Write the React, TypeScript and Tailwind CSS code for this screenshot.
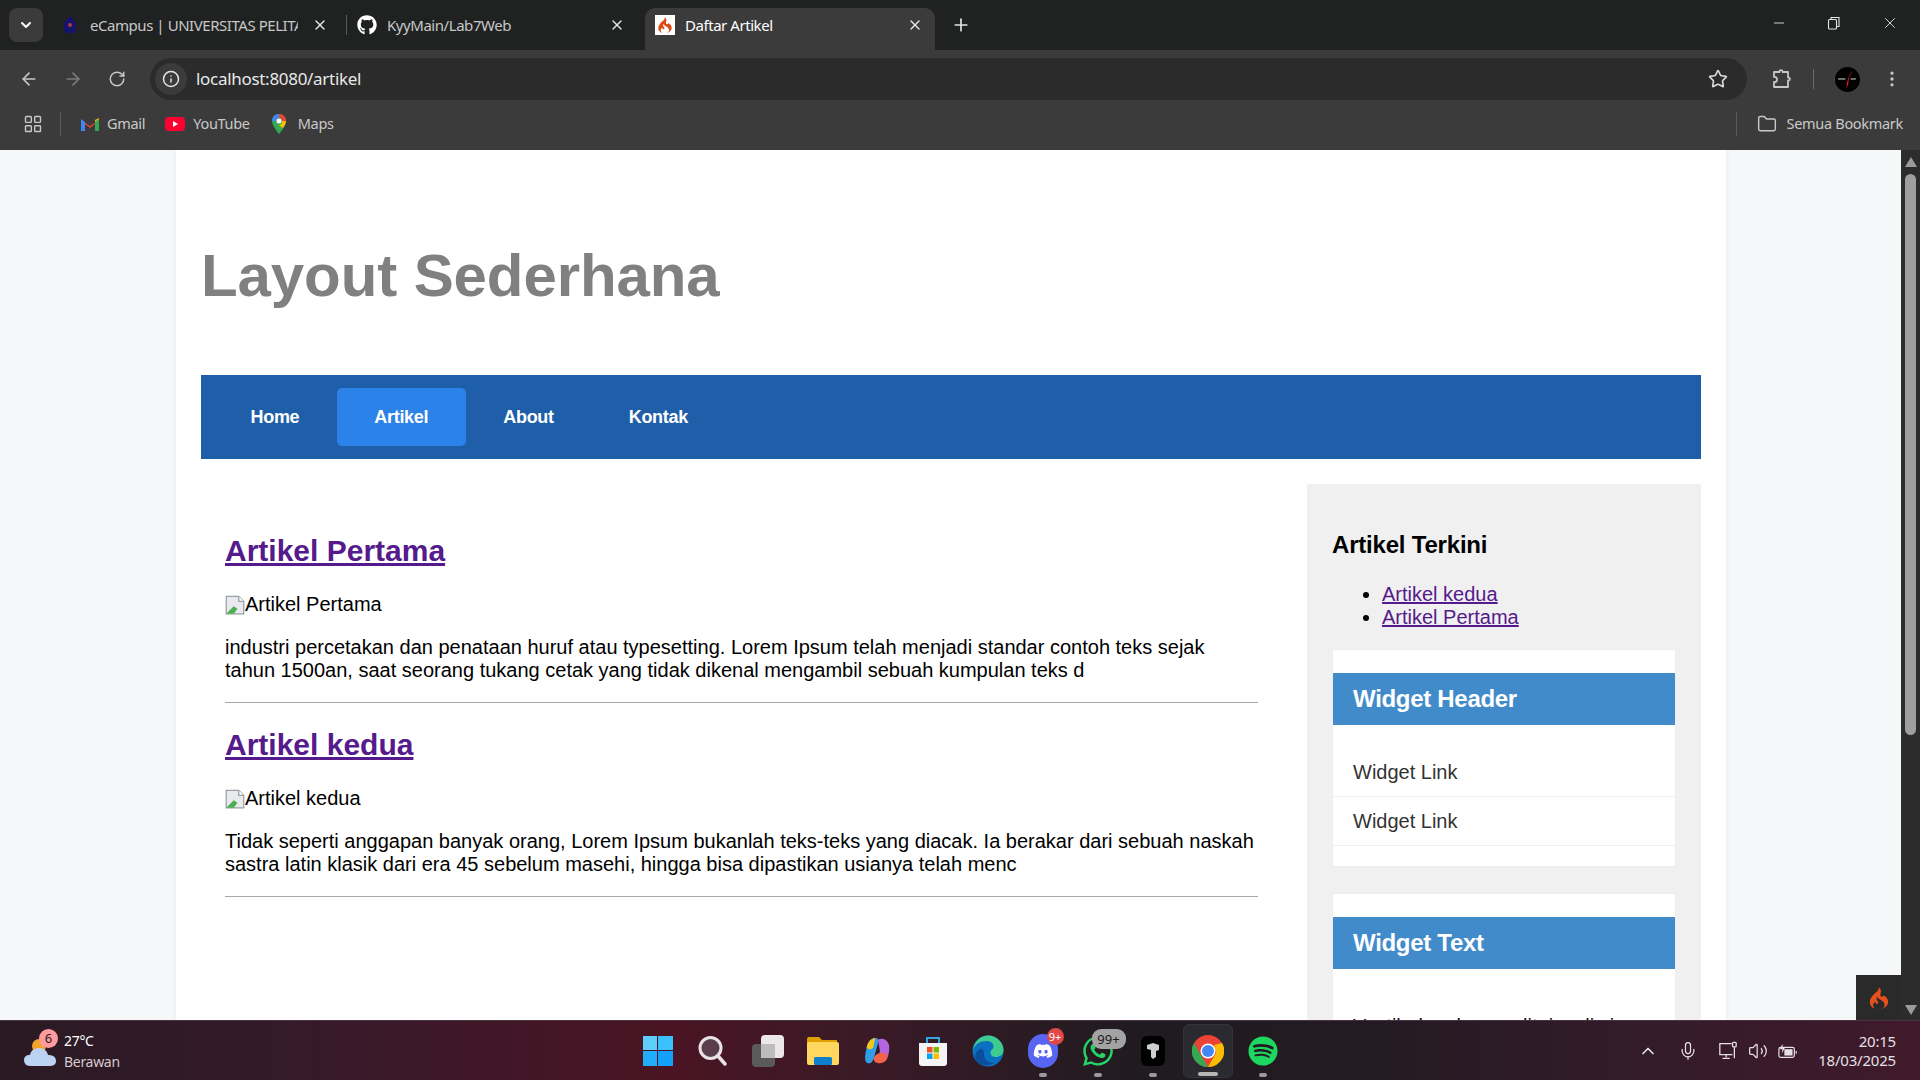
import React from 'react';
import { ArrowLeft, ArrowRight, RotateCw, Info, Star, EllipsisVertical, Folder, Plus, X, Minus, ChevronDown, ChevronUp, Mic, Volume2, LayoutGrid } from 'lucide-react';
import { FaGithub, FaDiscord, FaWhatsapp, FaSpotify } from 'react-icons/fa';
import { SiCodeigniter } from 'react-icons/si';

const uiFont = "font-['Noto_Sans',sans-serif]";

const Tab: React.FC<{ title: string; icon: React.ReactNode; active?: boolean }> = ({ title, icon, active }) => (
  <div className={`h-[42px] mt-2 pb-2 flex items-center pl-[10px] rounded-t-[10px] shrink-0 ${active ? 'w-[290px] pr-3 bg-[#3b3b3b] text-white' : 'w-[297px] pr-[19px] text-[#c7c7c7]'}`}>
    <div className="w-5 h-5 flex items-center justify-center shrink-0">{icon}</div>
    <span className="ml-[10px] mr-[14px] text-[15px] whitespace-nowrap overflow-hidden flex-1 tracking-[-0.45px]">{title}</span>
    <X className="w-4 h-4 text-[#e5e5e5] shrink-0" />
  </div>
);

const TabStrip = () => (
  <div className="h-[50px] bg-[#202222] flex items-start pl-[9px] shrink-0">
    <div className="w-[34px] h-[34px] mt-2 rounded-lg bg-[#3b3b3b] flex items-center justify-center shrink-0">
      <ChevronDown className="w-4 h-4 text-white" strokeWidth={3} />
    </div>
    <div className="w-[7px] shrink-0" />
    <Tab
      title="eCampus | UNIVERSITAS PELITA"
      icon={
        <svg viewBox="0 0 16 20" className="w-4 h-5">
          <path d="M8 1l6 7v10H2V8z" fill="#14146b" />
          <circle cx="8" cy="10" r="2" fill="#b03a3a" />
        </svg>
      }
    />
    <div className="w-px h-5 bg-[#5a5a5a] mt-[15px] -ml-px shrink-0" />
    <Tab title="KyyMain/Lab7Web" icon={<FaGithub className="w-5 h-5 text-white" />} />
    <div className="w-px shrink-0" />
    <Tab
      active
      title="Daftar Artikel"
      icon={
        <div className="w-5 h-5 bg-white flex items-center justify-center">
          <SiCodeigniter className="w-4 h-4 text-[#dd4814]" />
        </div>
      }
    />
    <Plus className="w-5 h-5 text-[#e5e5e5] ml-4 mt-[15px] shrink-0" />
    <div className="flex-1" />
    <div className="flex items-center h-[46px] text-[#e5e5e5]">
      <Minus className="w-4 h-4 mr-[40px]" strokeWidth={1.3} />
      <svg viewBox="0 0 14 14" className="w-[14px] h-[14px] mr-[40px]" fill="none" stroke="currentColor" strokeWidth="1.1">
        <rect x="1.5" y="3.5" width="8" height="9.5" rx="1" />
        <path d="M4 3.5V1.5h8v9h-2.5" />
      </svg>
      <X className="w-[18px] h-[18px] mr-[21px]" strokeWidth={1.2} />
    </div>
  </div>
);

const ToolBar = () => (
  <div className="h-[50px] flex items-center text-[#c7c7c7]">
    <div className="w-[150px] flex items-center pl-[19px] mt-[8px] shrink-0">
      <ArrowLeft className="w-5 h-5" />
      <ArrowRight className="w-5 h-5 ml-6 text-[#7c7c7c]" />
      <RotateCw className="w-[18px] h-[18px] ml-[25px]" />
    </div>
    <div className="flex-1 h-[42px] rounded-full bg-[#2b2b2b] flex items-center pl-[5px] pr-[19px] mt-[8px]">
      <div className="w-8 h-8 rounded-full bg-[#3b3b3b] flex items-center justify-center">
        <Info className="w-[18px] h-[18px] text-[#e5e5e5]" />
      </div>
      <span className="ml-[9px] text-[17px] text-[#e8e8e8] tracking-[-0.3px]">localhost:8080/artikel</span>
      <div className="flex-1" />
      <Star className="w-5 h-5 text-[#d8d8d8]" />
    </div>
    <div className="w-[173px] flex items-center shrink-0 pl-[25px] mt-[8px]">
      <svg viewBox="0 0 20 20" className="w-5 h-5" fill="none" stroke="#c7c7c7" strokeWidth="1.8" strokeLinejoin="round">
        <path d="M2 3h5.5c-.5-2.5 3.5-2.5 3 0H16v5.5c2.5-.5 2.5 3.5 0 3V18H2v-5c2 .5 3-1 3-2.5S4 7.500 2 8z" />
      </svg>
      <div className="w-px h-5 bg-[#6a6a6a] ml-[21px]" />
      <div className="ml-[21px] w-[25px] h-[25px] rounded-full bg-black flex items-center justify-center overflow-hidden">
        <svg viewBox="0 0 24 24" className="w-[25px] h-[25px]">
          <path d="M17 3C13 8 11 14 11 21c1-3 2-4 2-8 0-3 2-6 4-10z" fill="#e11d2a" />
          <rect x="3" y="11" width="7" height="1" fill="#cfcfcf" />
          <rect x="15" y="11" width="5" height="1" fill="#cfcfcf" />
        </svg>
      </div>
      <EllipsisVertical className="w-5 h-5 ml-[22px] text-[#c7c7c7]" />
    </div>
  </div>
);

const BookmarkBar = () => (
  <div className="h-[50px] pb-[2px] flex items-center text-[14.5px] text-[#c9c9c9] tracking-[-0.3px]">
    <LayoutGrid className="w-5 h-5 ml-[23px] text-[#c7c7c7]" strokeWidth={1.7} />
    <div className="w-px h-6 bg-[#5a5a5a] ml-[17px]" />
    <svg viewBox="0 0 20 16" className="w-[20px] h-4 ml-[19px] shrink-0">
      <path d="M1 15V4l9 6 9-6v11h-4V8l-5 4-5-4v7z" fill="#ea4335" />
      <path d="M1 15V3l4 3v9z" fill="#4285f4" />
      <path d="M15 15V6l4-3v12z" fill="#34a853" />
      <path d="M15 6l4-3v-1l-4 2z" fill="#fbbc04" />
    </svg>
    <span className="ml-[7px]">Gmail</span>
    <svg viewBox="0 0 20 16" className="w-5 h-4 ml-[20px] shrink-0">
      <rect x="0" y="1" width="20" height="14" rx="4" fill="#ff0033" />
      <path d="M8 5l5 3-5 3z" fill="#fff" />
    </svg>
    <span className="ml-[8px]">YouTube</span>
    <svg viewBox="0 0 16 22" className="w-[16px] h-[22px] ml-[21px] shrink-0">
      <path d="M8 1C4 1 1 4 1 8c0 5 7 13 7 13s7-8 7-13c0-4-3-7-7-7z" fill="#34a853" />
      <path d="M1 8c0-4 3-7 7-7v4a3 3 0 0 0-3 3z" fill="#4285f4" />
      <path d="M8 1c4 0 7 3 7 7h-4a3 3 0 0 0-3-3z" fill="#ea4335" />
      <path d="M15 8c0 2-1 4-3 7L6 11a3 3 0 0 0 5-3z" fill="#fbbc04" />
      <circle cx="8" cy="8" r="2.500" fill="#fff" />
    </svg>
    <span className="ml-[11px]">Maps</span>
    <div className="flex-1" />
    <div className="w-px h-6 bg-[#5a5a5a] mr-[20px]" />
    <Folder className="w-5 h-5 mr-[10px]" strokeWidth={1.7} />
    <span className="mr-[17px]">Semua Bookmark</span>
  </div>
);

const Article: React.FC<{ title: string; lines: string[]; first?: boolean }> = ({ title, lines, first }) => (
  <article className={`border-b border-[#a8a8a8] pb-5 ${first ? 'mt-[50px]' : 'mt-[25px]'}`}>
    <h2 className="text-[30px] leading-[34px] font-bold text-[#551a8b] underline">{title}</h2>
    <div className="mt-[25px] h-[23px] flex items-center text-[20px] leading-[23px]">
      <svg viewBox="0 0 16 16" className="w-5 h-5 shrink-0">
        <path d="M1 1h10l4 4v10H1z" fill="#e8eaed" stroke="#9aa0a6" strokeWidth="1" />
        <path d="M1 15l6-6 3 2-3 4z" fill="#4caf50" />
        <path d="M11 1v4h4" fill="#fff" stroke="#9aa0a6" />
      </svg>
      <span>{title}</span>
    </div>
    <div className="mt-[20px] text-[20px] leading-[23px] whitespace-nowrap">
      {lines.map((line) => (
        <p key={line}>{line}</p>
      ))}
    </div>
  </article>
);

const Widget: React.FC<{ title: string; children: React.ReactNode; mt: string }> = ({ title, children, mt }) => (
  <div className={`${mt} bg-white pt-[23px] pb-5 border border-[#eeeeee]`}>
    <h3 className="h-[52px] bg-[#428bca] text-white font-bold text-[24px] leading-[52px] px-5 tracking-[-0.3px]">{title}</h3>
    {children}
  </div>
);

const Page = () => (
  <div className="flex-1 h-full bg-[#f6f7f9] overflow-hidden">
    <div className="w-[1550px] ml-[176px] min-h-full bg-white px-[25px] font-['Liberation_Sans',sans-serif] text-black shadow-[0_0_6px_rgba(0,0,0,0.06)]">
      <header className="h-[225px] pt-[26px] flex items-center">
        <h1 className="text-[60px] leading-[70px] font-bold text-[#808080] tracking-[-0.1px]">Layout Sederhana</h1>
      </header>
      <nav className="h-[84px] bg-[#1f5faa] flex items-center px-3 text-white font-bold text-[18px] tracking-[-0.3px]">
        {['Home', 'Artikel', 'About', 'Kontak'].map((label) => (
          <a
            key={label}
            className={`h-[58px] px-[37.5px] flex items-center rounded-[5px] ${label === 'Artikel' ? 'bg-[#2b83ea]' : ''}`}
          >
            {label}
          </a>
        ))}
      </nav>
      <div className="flex mt-[25px]">
        <main className="w-[1106px] pl-[24px] pr-[49px] shrink-0">
          <Article
            first
            title="Artikel Pertama"
            lines={[
              'industri percetakan dan penataan huruf atau typesetting. Lorem Ipsum telah menjadi standar contoh teks sejak',
              'tahun 1500an, saat seorang tukang cetak yang tidak dikenal mengambil sebuah kumpulan teks d',
            ]}
          />
          <Article
            title="Artikel kedua"
            lines={[
              'Tidak seperti anggapan banyak orang, Lorem Ipsum bukanlah teks-teks yang diacak. Ia berakar dari sebuah naskah',
              'sastra latin klasik dari era 45 sebelum masehi, hingga bisa dipastikan usianya telah menc',
            ]}
          />
        </main>
        <aside className="w-[394px] bg-[#f0f0f0] px-[25px] pt-[47px] pb-6 shrink-0 h-[700px]">
          <h3 className="text-[24px] leading-[28px] font-bold tracking-[-0.2px]">Artikel Terkini</h3>
          <ul className="list-disc pl-[50px] mt-[24px] text-[20px] leading-[23px] text-[#551a8b] underline marker:text-black">
            <li>Artikel kedua</li>
            <li>Artikel Pertama</li>
          </ul>
          <Widget title="Widget Header" mt="mt-[20px]">
            <div className="mt-[23px] text-[20px] text-[#333333]">
              {['a', 'b'].map((key) => (
                <div key={key} className="h-[49px] flex items-center px-5 border-b border-[#eeeeee]">
                  Widget Link
                </div>
              ))}
            </div>
          </Widget>
          <Widget title="Widget Text" mt="mt-[26px]">
            <p className="mt-[46px] px-5 text-[20px] leading-[23px] text-[#111111]">Vestibulum lorem elit, iaculis in nisl</p>
          </Widget>
        </aside>
      </div>
    </div>
  </div>
);

const Scrollbar = () => (
  <div className="w-[19px] h-full bg-[#2c2c2c] flex flex-col items-center shrink-0">
    <div className="w-0 h-0 mt-[7px] border-x-[6.5px] border-x-transparent border-b-[10px] border-b-[#9b9b9b]" />
    <div className="w-[11px] h-[561px] mt-[7px] rounded-full bg-[#9f9f9f]" />
    <div className="flex-1" />
    <div className="w-0 h-0 mb-[5px] border-x-[6.5px] border-x-transparent border-t-[10px] border-t-[#9b9b9b]" />
  </div>
);

const TaskIcon: React.FC<{ children: React.ReactNode; dot?: boolean; active?: boolean }> = ({ children, dot, active }) => (
  <div className={`relative w-[50px] h-[54px] mx-[2.5px] flex items-center justify-center rounded-md ${active ? 'bg-[#2b2a30] border border-[#35343a]' : ''}`}>
    {children}
    {dot && <div className={`absolute bottom-[1px] h-[4px] rounded-full ${active ? 'w-5 bg-[#b5b5b5]' : 'w-2 bg-[#9a9a9a]'}`} />}
  </div>
);

const Taskbar = () => (
  <div className={`h-[60px] shrink-0 flex items-center border-t border-[#4a3340] text-white bg-[linear-gradient(90deg,#2a1a24_0%,#351a2a_15%,#4a1424_35%,#3a1a26_45%,#1f1b20_60%,#241b22_72%,#331b2b_85%,#401a2b_100%)] ${uiFont}`}>
    <div className="w-[620px] flex items-center pl-[24px] shrink-0">
      <div className="relative w-[34px] h-[34px]">
        <svg viewBox="0 0 34 34" className="w-[34px] h-[34px]">
          <circle cx="15" cy="12" r="7" fill="#f2a32c" />
          <path d="M6 32c-4 0-6-3-6-6s2-5 6-5c1-5 5-7 9-7 5 0 8 3 9 7 5 0 8 2 8 6s-3 5-7 5z" fill="#bcd3f2" />
        </svg>
        <div className="absolute -top-[5px] left-[15px] w-[19px] h-[19px] rounded-full bg-[#ff9a9e] text-[#2a1a24] text-[13px] leading-[19px] text-center">6</div>
      </div>
      <div className="ml-[6px] text-[14px] leading-[21px] tracking-[-0.3px]">
        <div>27°C</div>
        <div className="text-[#d6c9cf]">Berawan</div>
      </div>
    </div>
    <div className="flex items-center ml-[10px]">
      <TaskIcon>
        <div className="grid grid-cols-2 gap-[1px] w-[30px] h-[30px]">
          <div className="bg-[#5fcdf9]" />
          <div className="bg-[#3cc0fb]" />
          <div className="bg-[#22adfb]" />
          <div className="bg-[#12a0fa]" />
        </div>
      </TaskIcon>
      <TaskIcon>
        <svg viewBox="0 0 30 32" className="w-[30px] h-8">
          <circle cx="12.500" cy="13" r="10.500" fill="#5a3f4a" stroke="#e8e4e6" strokeWidth="3" />
          <path d="M20 21l7 8" stroke="#e8e4e6" strokeWidth="3.500" strokeLinecap="round" />
        </svg>
      </TaskIcon>
      <TaskIcon>
        <div className="relative w-8 h-8">
          <div className="absolute left-0 bottom-0 w-[23px] h-[23px] bg-[#5a5a5a] rounded-sm" />
          <div className="absolute right-0 top-0 w-[23px] h-[23px] bg-white/90 rounded-sm" />
          <div className="absolute left-[9px] top-[9px] w-[14px] h-[14px] bg-[#bdbdbd]" />
        </div>
      </TaskIcon>
      <TaskIcon>
        <svg viewBox="0 0 32 30" className="w-8 h-[30px]">
          <path d="M0 3a2 2 0 0 1 2-2h10l3 3h15v6H0z" fill="#e0a100" />
          <rect x="0" y="6" width="32" height="23" rx="2" fill="#ffd75e" />
          <rect x="7" y="21" width="18" height="8" rx="1.500" fill="#0f7fc9" />
        </svg>
      </TaskIcon>
      <TaskIcon>
        <svg viewBox="0 0 32 32" className="w-[30px] h-[30px]">
          <path d="M4 12c1-6 5-10 9-10 3 0 5 2 3 6l-4 14c-1 4-3 8-7 7-4-1-3-9-1-17z" fill="#2f9ee8" />
          <path d="M4 12c1-6 5-10 9-10l-2 10c-2 3-5 3-7 0z" fill="#f5c518" />
          <path d="M16 4c5-3 12 1 12 8s-2 16-8 16c-4 0-3-6-2-12z" fill="#b565e0" />
          <path d="M12 22c3-4 10-6 14-2 1 5-3 9-8 9-5 0-8-3-6-7z" fill="#f2644a" />
        </svg>
      </TaskIcon>
      <TaskIcon>
        <svg viewBox="0 0 30 32" className="w-[30px] h-8">
          <path d="M9 8V3h12v5" fill="none" stroke="#2ea8e0" strokeWidth="2" />
          <path d="M1 8h28v20a3 3 0 0 1-3 3H4a3 3 0 0 1-3-3z" fill="#f4f4f4" />
          <rect x="9" y="12" width="5.500" height="5.500" fill="#f25022" />
          <rect x="15.500" y="12" width="5.500" height="5.500" fill="#7fba00" />
          <rect x="9" y="18.500" width="5.500" height="5.500" fill="#00a4ef" />
          <rect x="15.500" y="18.500" width="5.500" height="5.500" fill="#ffb900" />
        </svg>
      </TaskIcon>
      <TaskIcon>
        <svg viewBox="0 0 32 32" className="w-8 h-8">
          <circle cx="16" cy="16" r="15.500" fill="#0c70c0" />
          <path d="M1 15C2 6 9 .5 16 .5 25 .5 31.500 8 31.500 15c0 5-4 7-8 7-3 0-5-2-5-4 0-4 3-3 3-7 0-3-3-5-7-5C8 6 3 9 1 15z" fill="#3ecb8e" />
          <path d="M12 19c0 6 5 9 10 9-5 4-15 3-18-3-2-4 0-9 4-11 3-1 4 2 4 5z" fill="#0a4f9c" />
        </svg>
      </TaskIcon>
      <TaskIcon dot>
        <div className="w-[30px] h-[34px] rounded-[15px] bg-[#5865f2] flex items-center justify-center">
          <FaDiscord className="w-5 h-5 text-white" />
        </div>
        <div className="absolute top-[4px] right-[4px] w-[17px] h-[17px] rounded-full bg-[#e04848] text-white text-[11px] leading-[17px] text-center">9+</div>
      </TaskIcon>
      <TaskIcon dot>
        <FaWhatsapp className="w-[34px] h-[34px] text-[#25d366]" />
        <div className="absolute top-[5px] right-[-3px] w-[34px] h-[20px] rounded-[9px] bg-[#a3a3a3] text-[#1a1a1a] text-[13px] leading-[20px] text-center">99+</div>
      </TaskIcon>
      <TaskIcon dot>
        <div className="w-6 h-[30px] rounded-md bg-black flex items-center justify-center">
          <svg viewBox="0 0 14 18" className="w-[14px] h-[18px]">
            <path d="M1 3l6-2 6 2v5l-3 1v6l-3 2-2-2V8L1 7z" fill="#cfcfcf" />
          </svg>
        </div>
      </TaskIcon>
      <TaskIcon dot active>
        <svg viewBox="0 0 32 32" className="w-8 h-8">
          <circle cx="16" cy="16" r="16" fill="#ea4335" />
          <path d="M16 32A16 16 0 0 1 2 8l8 14z" fill="#34a853" />
          <path d="M30 8a16 16 0 0 1-14 24l8-14 -2-8z" fill="#fbbc04" />
          <circle cx="16" cy="16" r="7.500" fill="#fff" />
          <circle cx="16" cy="16" r="6" fill="#4285f4" />
        </svg>
      </TaskIcon>
      <TaskIcon dot>
        <FaSpotify className="w-[30px] h-[30px] text-[#1ed760]" />
      </TaskIcon>
    </div>
    <div className="flex-1" />
    <div className="flex items-center text-[#e6e0e3]">
      <ChevronUp className="w-5 h-5" strokeWidth={2} />
      <Mic className="w-5 h-5 ml-5" strokeWidth={1.5} />
      <svg viewBox="0 0 22 22" className="w-5 h-5 ml-5" fill="none" stroke="currentColor" strokeWidth="1.4">
        <path d="M15 3H2v12h14" />
        <path d="M9 15v3M5 19h8" />
        <rect x="16" y="1.500" width="4" height="5" rx="1" />
        <path d="M18 7v12" />
      </svg>
      <Volume2 className="w-5 h-5 ml-[10px]" strokeWidth={1.5} />
      <svg viewBox="0 0 22 18" className="w-5 h-[18px] ml-[10px]" fill="none" stroke="currentColor" strokeWidth="1.3">
        <rect x="1" y="5" width="17" height="11" rx="2" />
        <rect x="7" y="7" width="9" height="7" fill="currentColor" stroke="none" />
        <path d="M20 9v3" />
        <path d="M5 1L2 7h3l-1 5 4-7H5z" fill="currentColor" stroke="none" />
      </svg>
      <div className="ml-5 mr-6 text-[15px] leading-[19px] text-right tracking-[-0.2px]">
        <div>20:15</div>
        <div>18/03/2025</div>
      </div>
    </div>
  </div>
);

export default function App() {
  return (
    <div className={`relative w-[1920px] h-[1080px] overflow-hidden flex flex-col ${uiFont}`}>
      <TabStrip />
      <div className="bg-[#3b3b3b] shrink-0">
        <ToolBar />
        <BookmarkBar />
      </div>
      <div className="relative flex-1 min-h-0 flex">
        <Page />
        <Scrollbar />
        <div className="absolute right-[19px] bottom-0 w-[45px] h-[45px] bg-[#2a2a2a] flex items-center justify-center">
          <SiCodeigniter className="w-[22px] h-[26px] text-[#e8501a]" />
        </div>
      </div>
      <Taskbar />
    </div>
  );
}
